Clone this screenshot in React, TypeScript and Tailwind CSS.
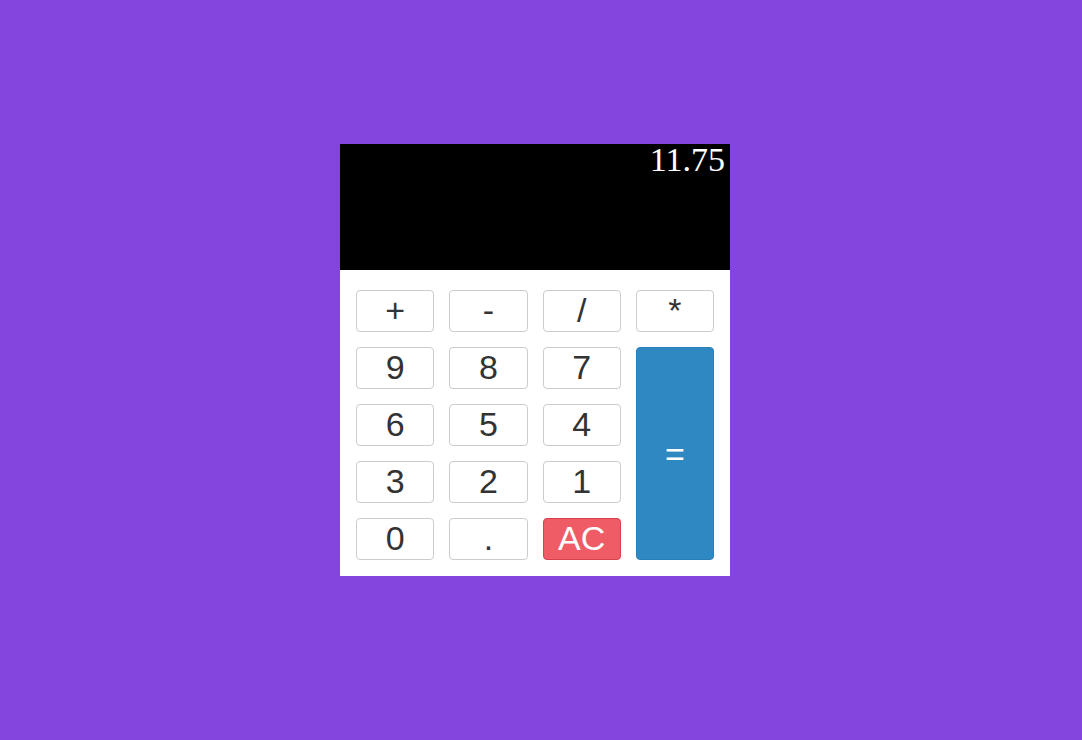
import React from "react";

const keys = [
  ["+", "-", "/", "*"],
  ["9", "8", "7"],
  ["6", "5", "4"],
  ["3", "2", "1"],
  ["0", ".", "AC"],
];

function Key({ label }: { label: string }) {
  const isClear = label === "AC";
  return (
    <button
      type="button"
      className={
        isClear
          ? "flex h-[42px] items-center justify-center rounded border border-[#d9404c] bg-[#f05c66] pb-[2px] text-[34px] leading-none text-white"
          : "flex h-[42px] items-center justify-center rounded border border-[#cccccc] bg-white pb-[2px] text-[34px] leading-none text-[#333333]"
      }
    >
      {label}
    </button>
  );
}

export default function App() {
  return (
    <div className="flex h-[740px] w-full items-start justify-center bg-[#8445df] pr-[12px] pt-[144px] font-['Liberation_Sans',Arial,sans-serif]">
      <div className="w-[390px]">
        <div className="h-[126px] bg-black pr-[5px] text-right font-['Liberation_Serif','Times_New_Roman',serif] text-[34px] leading-[32px] text-white">
          11.75
        </div>
        <div className="grid grid-cols-4 grid-rows-5 gap-x-[15px] gap-y-[15px] bg-white px-4 pb-4 pt-5">
          {keys[0].map((k) => (
            <Key key={k} label={k} />
          ))}
          {keys.slice(1).map((row, i) => (
            <React.Fragment key={i}>
              {row.map((k) => (
                <Key key={k} label={k} />
              ))}
              {i === 0 && (
                <button
                  type="button"
                  className="row-span-4 flex items-center justify-center rounded border border-[#2a7fb6] bg-[#2e89c2] text-[34px] leading-none text-white"
                >
                  =
                </button>
              )}
            </React.Fragment>
          ))}
        </div>
      </div>
    </div>
  );
}
